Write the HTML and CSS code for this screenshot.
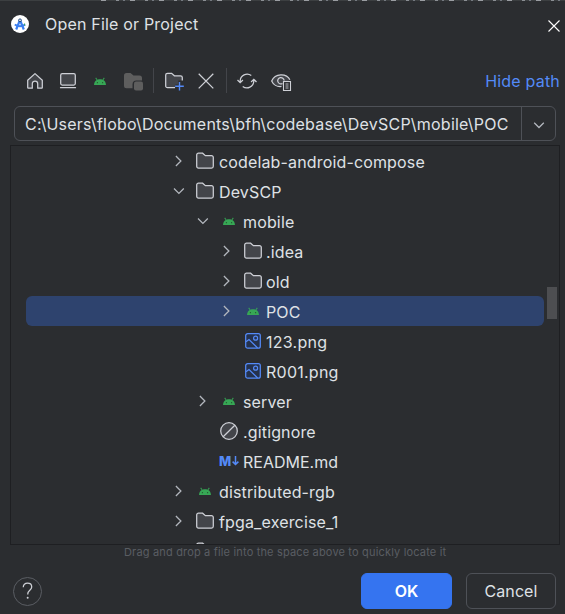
FILE: index.html
```html
<!DOCTYPE html>
<html lang="en">
<head>
<meta charset="utf-8">
<title>Open File or Project</title>
<link rel="stylesheet" href="styles.css">
</head>
<body>
<svg class="defs" width="0" height="0">
  <defs>
    <symbol id="folder" viewBox="0 0 20 20"><path d="M1.700 4a1.800 1.800 0 0 1 1.800-1.800h4.100l2.800 2.400h6.100a1.800 1.800 0 0 1 1.800 1.800v8.900a1.800 1.800 0 0 1-1.800 1.800h-13a1.800 1.800 0 0 1-1.800-1.800z" fill="#43454a" stroke="#ced0d6" stroke-width="1.250"/></symbol>
    <symbol id="android" viewBox="0 0 20 20"><path d="M4 14c.2-2.500 1.200-4 2.700-4.900L5.300 7.200l.8-.6 1.400 2.100c1.600-.6 3.400-.6 5 0l1.400-2.100.8.600-1.400 1.900c1.500.9 2.500 2.400 2.700 4.900z" fill="#37a755"/><circle cx="7.400" cy="11.700" r=".65" fill="#24552f"/><circle cx="12.600" cy="11.700" r=".65" fill="#24552f"/></symbol>
    <symbol id="image" viewBox="0 0 20 20"><rect x="2.700" y="2.600" width="14.600" height="14.600" rx="2" fill="#25324d" stroke="#548af7" stroke-width="1.250"/><circle cx="12.600" cy="7.200" r="2" fill="none" stroke="#548af7" stroke-width="1.200"/><path d="M3 10.800l3-2.300 8.600 8.500" fill="none" stroke="#548af7" stroke-width="1.200"/></symbol>
    <symbol id="right" viewBox="0 0 20 20"><path d="M7.900 5l5 5-5 5" fill="none" stroke="#b4b8bf" stroke-width="1.250"/></symbol>
    <symbol id="down" viewBox="0 0 20 20"><path d="M6 7.500l4.900 4.900 4.900-4.900" fill="none" stroke="#b4b8bf" stroke-width="1.250"/></symbol>
  </defs>
</svg>
<main class="dialog">
  <div class="backdrop"></div>
  <header class="titlebar">
    <svg class="logo" viewBox="0 0 18 18"><circle cx="9" cy="9" r="9" fill="#fff"/><path d="M9 5L5.200 14.500M9 5l3.800 9.500" fill="none" stroke="#3b7ff0" stroke-width="2.200"/><path d="M3.800 9.500c2.500 2.300 7.900 2.300 10.400 0" fill="none" stroke="#3b7ff0" stroke-width="1.800"/><circle cx="9" cy="5.300" r="1.400" fill="#d6e5ff" stroke="#204470" stroke-width=".9"/><path d="M13.600 8.500v2" stroke="#3ca65b" stroke-width="1"/></svg>
    <h1 class="title">Open File or Project</h1>
    <svg class="close" viewBox="0 0 12 12"><path d="M.5.500l11 11M11.500.500l-11 11" stroke="#fff" stroke-width="1.100"/></svg>
  </header>
  <nav class="toolbar">
    <svg class="tool" viewBox="0 0 20 20"><path d="M2.700 9.200L10 2.600l7.300 6.600v7.200a.8.800 0 0 1-.8.800h-3.800v-4.500a2.700 2.700 0 0 0-5.400 0v4.500H3.500a.8.800 0 0 1-.8-.8z" fill="#43454a" stroke="#ced0d6" stroke-width="1.250" stroke-linejoin="round"/></svg>
    <svg class="tool" viewBox="0 0 20 20"><rect x="2.700" y="2.700" width="14.600" height="11.300" rx="1.500" fill="#43454a" stroke="#ced0d6" stroke-width="1.250"/><path d="M2.500 16.700h15" stroke="#ced0d6" stroke-width="1.250" stroke-linecap="round"/></svg>
    <svg class="tool"><use href="#android"/></svg>
    <svg class="tool module" viewBox="0 0 20 20"><path d="M1 4.500A2.500 2.500 0 0 1 3.500 2h4l3 2.500h6A2.500 2.500 0 0 1 19 7v2.500h-5.500a4 4 0 0 0-4 4v3.700h-6A2.500 2.500 0 0 1 1 14.700z" fill="#5e5e5e"/><rect x="11" y="10.500" width="9" height="9" rx="2" fill="#5e5e5e"/></svg>
    <i class="divider"></i>
    <svg class="tool" viewBox="0 0 20 20"><path d="M11.500 16.700h-8a1.800 1.800 0 0 1-1.800-1.800V4.100a1.800 1.800 0 0 1 1.800-1.800h4.100l2.800 2.500h6.100a1.800 1.800 0 0 1 1.800 1.800v2.900h-4v4h-2.800z" fill="#43454a"/><path d="M11 16.700H3.500a1.800 1.800 0 0 1-1.800-1.800V4.100a1.800 1.800 0 0 1 1.800-1.800h4.100l2.800 2.500h6.100a1.800 1.800 0 0 1 1.800 1.800v2.900" fill="none" stroke="#ced0d6" stroke-width="1.250"/><path d="M15.500 11v8.500M11.200 15.200h8.600" stroke="#548af7" stroke-width="1.400"/></svg>
    <svg class="tool cross" viewBox="0 0 20 20"><path d="M2.700 2.800l14.600 14.600M17.300 2.800L2.700 17.400" stroke="#ced0d6" stroke-width="1.250"/></svg>
    <i class="divider"></i>
    <svg class="tool" viewBox="0 0 20 20"><path d="M3.200 11.600V10A6.900 6.900 0 0 1 14.300 4.600M16.800 8.400V10A6.900 6.900 0 0 1 5.700 15.400M.5 9l2.700 2.700L5.900 9M14.100 11l2.700-2.700 2.700 2.700" fill="none" stroke="#ced0d6" stroke-width="1.250"/></svg>
    <svg class="tool eye" viewBox="0 0 22 20"><path d="M11.500 15.500C7 16.200 3.200 13.500 1.700 10c3.400-8 14.800-8 18.200-1.200" fill="#43454a" stroke="#ced0d6" stroke-width="1.250"/><path d="M12.500 12.500a3.200 3.200 0 1 1 1.600-3" fill="none" stroke="#ced0d6" stroke-width="1.250"/><rect x="13.500" y="10.500" width="7" height="9" fill="#2b2d30" stroke="#ced0d6" stroke-width="1.100"/><path d="M15.500 13h3M15.500 15h3M15.500 17h3" stroke="#ced0d6" stroke-width=".9"/></svg>
    <a class="hide">Hide path</a>
  </nav>
  <div class="path"><span class="path-text">C:\Users\flobo\Documents\bfh\codebase\DevSCP\mobile\POC</span><span class="drop"><svg class="icon" viewBox="0 0 20 20"><path d="M5.200 8.700l4.800 4.800 4.800-4.800" fill="none" stroke="#b4b8bf" stroke-width="1.250"/></svg></span></div>
  <section class="tree">
    <div class="row"><svg class="icon"><use href="#right"/></svg><svg class="icon kind"><use href="#folder"/></svg><span class="name">codelab-android-compose</span></div>
    <div class="row"><svg class="icon"><use href="#down"/></svg><svg class="icon kind"><use href="#folder"/></svg><span class="name">DevSCP</span></div>
    <div class="row l1"><svg class="icon"><use href="#down"/></svg><svg class="icon kind"><use href="#android"/></svg><span class="name">mobile</span></div>
    <div class="row l2"><svg class="icon"><use href="#right"/></svg><svg class="icon kind"><use href="#folder"/></svg><span class="name">.idea</span></div>
    <div class="row l2"><svg class="icon"><use href="#right"/></svg><svg class="icon kind"><use href="#folder"/></svg><span class="name">old</span></div>
    <div class="row l2 selected"><svg class="icon"><use href="#right"/></svg><svg class="icon kind"><use href="#android"/></svg><span class="name">POC</span></div>
    <div class="row l2"><span class="icon"></span><svg class="icon kind"><use href="#image"/></svg><span class="name wide">123.png</span></div>
    <div class="row l2"><span class="icon"></span><svg class="icon kind"><use href="#image"/></svg><span class="name wide">R001.png</span></div>
    <div class="row l1"><svg class="icon"><use href="#right"/></svg><svg class="icon kind"><use href="#android"/></svg><span class="name">server</span></div>
    <div class="row l1"><span class="icon"></span><svg class="icon kind" viewBox="0 0 20 20"><circle cx="10" cy="10" r="8.300" fill="#43454a" stroke="#ced0d6" stroke-width="1.250"/><path d="M4.200 15.800L15.800 4.200" stroke="#ced0d6" stroke-width="1.250"/></svg><span class="name">.gitignore</span></div>
    <div class="row l1"><span class="icon"></span><span class="icon kind md"><b>M</b><svg class="arrow" viewBox="0 0 7 10"><path d="M3.500 0v8.500M.6 5.600l2.900 2.900 2.900-2.900" fill="none" stroke="#548af7" stroke-width="1.500"/></svg></span><span class="name tight">README.md</span></div>
    <div class="row"><svg class="icon"><use href="#right"/></svg><svg class="icon kind"><use href="#android"/></svg><span class="name">distributed-rgb</span></div>
    <div class="row"><svg class="icon"><use href="#right"/></svg><svg class="icon kind"><use href="#folder"/></svg><span class="name">fpga_exercise_1</span></div>
    <div class="row"><span class="icon"></span><svg class="icon kind"><use href="#folder"/></svg></div>
    <i class="thumb"></i>
  </section>
  <p class="hint">Drag and drop a file into the space above to quickly locate it</p>
  <footer class="footer">
    <button class="help"><svg class="question" viewBox="0 0 12 20"><path d="M1.300 5.800C1.300 3 3.200 1.300 6 1.300s4.700 1.700 4.700 4.200c0 3.600-4.400 3.700-4.400 7.700v.7" fill="none" stroke="#ced0d6" stroke-width="1.400"/><circle cx="6.200" cy="17.500" r="1.100" fill="#ced0d6"/></svg></button>
    <button class="btn ok">OK</button>
    <button class="btn cancel">Cancel</button>
  </footer>
</main>
</body>
</html>
```
FILE: styles.css
```css
* { box-sizing: border-box; }
body { margin: 0; background: #2b2d30; font: 16px/20px Inter, "Liberation Sans", sans-serif; color: #dfe1e5; }
.defs { position: absolute; }
svg { display: block; flex: none; }
.dialog { width: 565px; height: 614px; overflow: hidden; background: #2b2d30; }
.backdrop { height: 1px; background: linear-gradient(90deg, #3c3f41 98px, transparent 98px), repeating-linear-gradient(90deg, #8b8f94 0 3px, #3c3f41 3px 7px, #747980 7px 9px, #3c3f41 9px 14px, #9a9da2 14px 19px, #3c3f41 19px 29px); }
.titlebar { display: flex; align-items: center; height: 46px; padding: 0 5px 0 11px; }
.logo { width: 18px; height: 18px; }
.title { margin: 0 0 0 16px; font-size: 16px; font-weight: 400; letter-spacing: .19px; }
.close { width: 12px; height: 12px; margin: 3px 0 0 auto; }
.toolbar { display: flex; align-items: center; height: 59px; padding: 9px 5px 0 25px; }
.tool { width: 20px; height: 20px; margin: -1px 12.500px 0 0; }
.module { margin-right: 10px; }
.divider { width: 1px; height: 25px; margin: -2px 10px 0 0; background: #43454a; }
.cross { margin-right: 10px; }
.eye { width: 22px; }
.hide { margin-left: auto; color: #548af7; letter-spacing: .2px; }
.path { display: flex; width: 542px; height: 35px; margin: 0 0 4px 14px; border: 1px solid #4e5157; border-radius: 6px; }
.path-text { flex: 1; padding-left: 10px; line-height: 34px; letter-spacing: .22px; white-space: nowrap; }
.drop { display: flex; justify-content: center; align-items: center; width: 34px; border-left: 1px solid #4e5157; }
.tree { position: relative; width: 550px; height: 400px; margin-left: 10px; border: 1px solid #1e1f22; overflow: hidden; }
.row { display: flex; align-items: center; width: 518px; height: 30px; margin-left: 15px; padding-left: 142px; border-radius: 6px; }
.l1 { padding-left: 166px; }
.l2 { padding-left: 189.500px; }
.selected { background: #2e436e; }
.icon { flex: none; width: 20px; height: 20px; }
.kind { margin: 0 4px 0 7px; }
.name { padding-top: 2px; letter-spacing: .15px; white-space: nowrap; }
.wide { letter-spacing: .25px; }
.tight { letter-spacing: 0; }
.l2 .kind { margin-right: 3.500px; }
.md { display: flex; align-items: center; gap: 2px; color: #548af7; font-size: 13px; }
.md b { font-weight: 800; width: 11px; }
.arrow { width: 7px; height: 10px; }
.thumb { position: absolute; top: 141px; right: 2px; width: 10px; height: 32px; background: #4d4e51; }
.hint { margin: 0; height: 14px; padding-left: 124px; font-size: 11px; line-height: 14px; letter-spacing: .17px; color: #5a5d63; white-space: nowrap; }
.footer { display: flex; align-items: center; height: 54px; margin-top: 5px; padding: 0 9px 0 13px; }
.help { display: grid; place-items: center; width: 29px; height: 29px; padding: 0; border: 1px solid #5a5d63; border-radius: 50%; background: none; }
.question { width: 11px; height: 18px; }
.btn { height: 36px; padding: 0; border: 1px solid #4e5157; border-radius: 6px; background: none; color: #dfe1e5; font: 16px/20px Inter, sans-serif; letter-spacing: .1px; }
.ok { width: 91px; margin-left: auto; margin-right: 14px; border-color: #3574f0; background: #3574f0; color: #fff; font-weight: 600; }
.cancel { width: 90px; }
```
